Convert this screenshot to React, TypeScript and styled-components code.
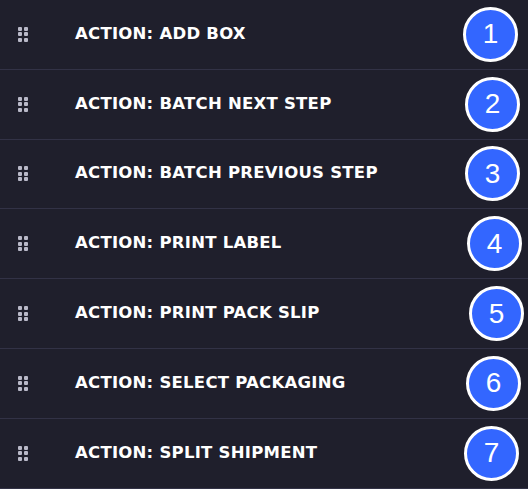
import React from "react";
import styled, { createGlobalStyle } from "styled-components";

const Global = createGlobalStyle`
  html, body { margin: 0; padding: 0; background: #1f1f2c; }
  body { width: 528px; height: 489px; overflow: hidden; }
`;

const List = styled.div`
  display: flex;
  flex-direction: column;
  width: 528px;
  background: #1f1f2c;
`;

const Row = styled.div`
  display: flex;
  align-items: center;
  height: 68.8px;
  border-bottom: 1px solid #323246;
`;

const Handle = styled.div`
  display: grid;
  grid-template-columns: repeat(2, 4px);
  grid-auto-rows: 4px;
  gap: 1.5px;
  margin-left: 18px;
  width: 10px;
  span {
    background: #b9b9c8;
    border-radius: 1px;
  }
`;

const Label = styled.div`
  margin-left: 47px;
  margin-top: -2px;
  font-family: "DejaVu Sans", "Open Sans", sans-serif;
  font-weight: 700;
  font-size: 16.5px;
  letter-spacing: 0.25px;
  color: #ffffff;
  flex: 1;
`;

const Badge = styled.div<{ $shift: number }>`
  width: 49px;
  height: 49px;
  border-radius: 50%;
  border: 3px solid #ffffff;
  background: #3366ff;
  color: #ffffff;
  display: flex;
  align-items: center;
  justify-content: center;
  font-family: "Liberation Sans", Arial, sans-serif;
  font-size: 28px;
  margin-right: ${(p) => 10 - p.$shift}px;
  flex-shrink: 0;
`;

const items = [
  ["ACTION: ADD BOX", 0],
  ["ACTION: BATCH NEXT STEP", 2],
  ["ACTION: BATCH PREVIOUS STEP", 2],
  ["ACTION: PRINT LABEL", 4],
  ["ACTION: PRINT PACK SLIP", 6],
  ["ACTION: SELECT PACKAGING", 3],
  ["ACTION: SPLIT SHIPMENT", 1],
] as const;

export default function App() {
  return (
    <>
      <Global />
      <List>
        {items.map(([label, shift], i) => (
          <Row key={label}>
            <Handle>
              {Array.from({ length: 6 }).map((_, j) => (
                <span key={j} />
              ))}
            </Handle>
            <Label>{label}</Label>
            <Badge $shift={shift}>{i + 1}</Badge>
          </Row>
        ))}
      </List>
    </>
  );
}
